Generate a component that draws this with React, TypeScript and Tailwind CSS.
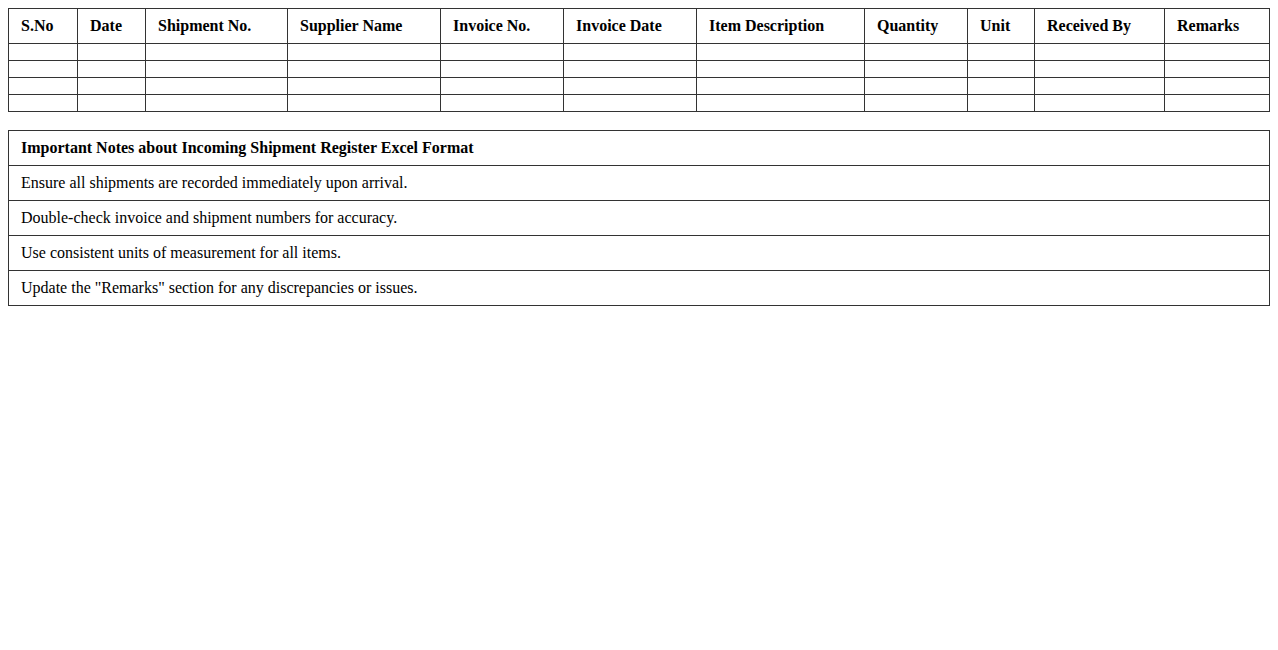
import React from "react";

const headers = [
  "S.No",
  "Date",
  "Shipment No.",
  "Supplier Name",
  "Invoice No.",
  "Invoice Date",
  "Item Description",
  "Quantity",
  "Unit",
  "Received By",
  "Remarks",
];
const widths = [69, 68, 142, 153, 123, 133, 168, 103, 67, 130, 105];

const notes = [
  "Ensure all shipments are recorded immediately upon arrival.",
  "Double-check invoice and shipment numbers for accuracy.",
  "Use consistent units of measurement for all items.",
  'Update the "Remarks" section for any discrepancies or issues.',
];

export default function App() {
  return (
    <div
      className="m-2 text-black bg-white text-[16px] leading-[18px]"
      style={{ fontFamily: '"Liberation Serif", "Times New Roman", serif' }}
    >
      <table className="w-full table-fixed border-collapse">
        <colgroup>
          {widths.map((w, i) => (
            <col key={i} style={{ width: w }} />
          ))}
        </colgroup>
        <thead>
          <tr>
            {headers.map((h) => (
              <th
                key={h}
                className="border border-[#333] px-3 py-2 text-left font-bold"
              >
                {h}
              </th>
            ))}
          </tr>
        </thead>
        <tbody>
          {[0, 1, 2, 3].map((r) => (
            <tr key={r}>
              {headers.map((h) => (
                <td key={h} className="border border-[#333] px-3 py-2"></td>
              ))}
            </tr>
          ))}
        </tbody>
      </table>

      <table className="mt-[18px] w-full border-collapse">
        <thead>
          <tr>
            <th className="border border-[#333] px-3 py-2 text-left font-bold">
              Important Notes about Incoming Shipment Register Excel Format
            </th>
          </tr>
        </thead>
        <tbody>
          {notes.map((n) => (
            <tr key={n}>
              <td className="border border-[#333] px-3 py-2">{n}</td>
            </tr>
          ))}
        </tbody>
      </table>
    </div>
  );
}
